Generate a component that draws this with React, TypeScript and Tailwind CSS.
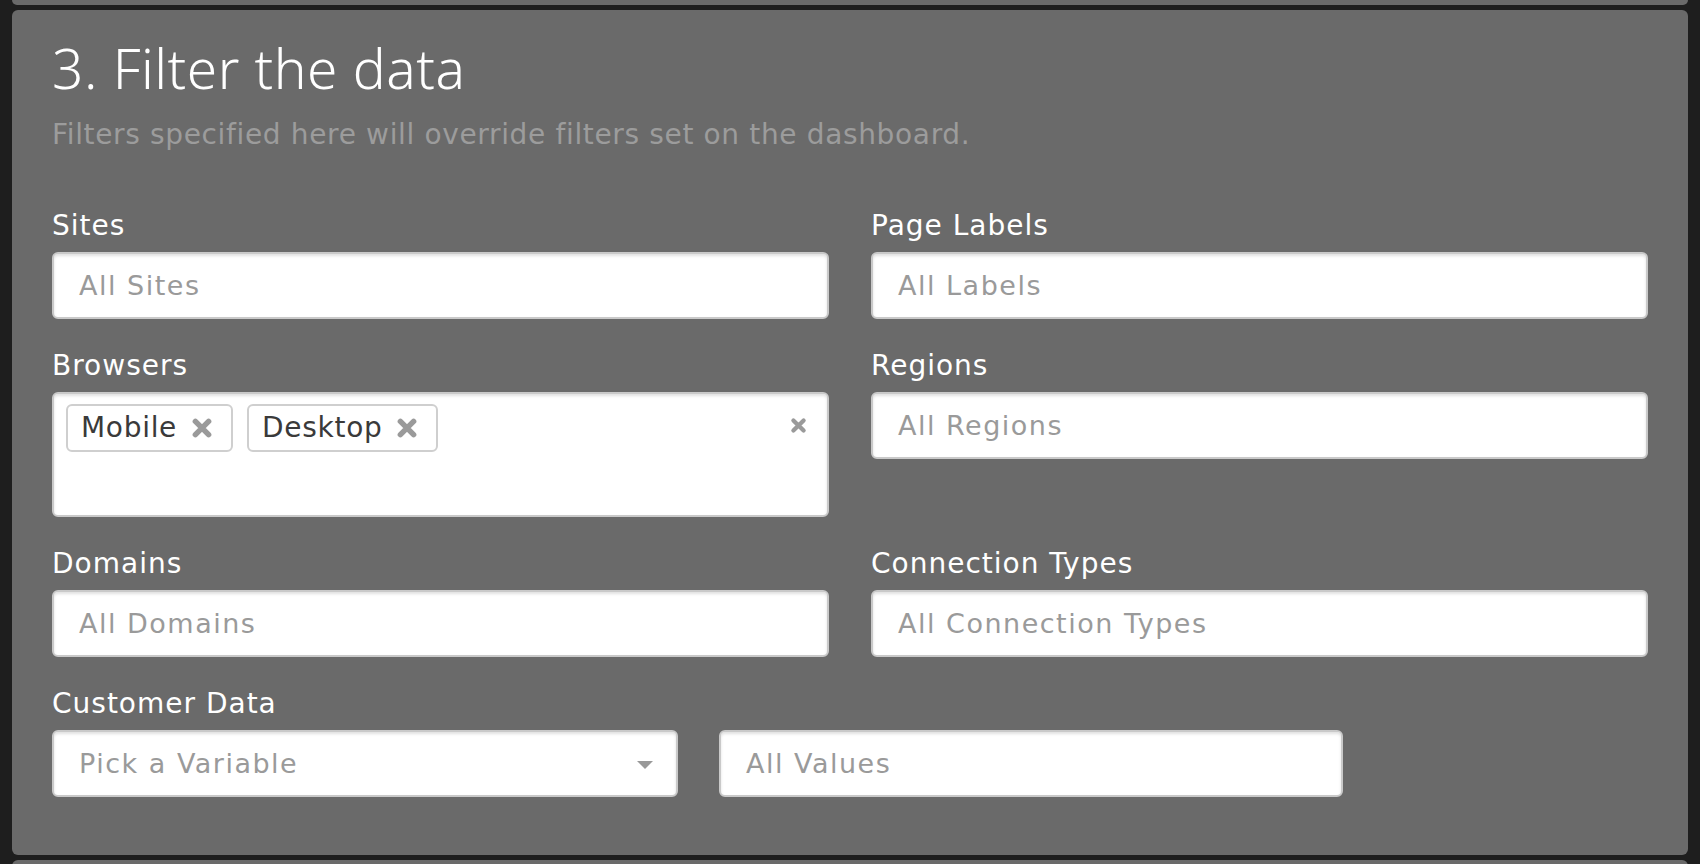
import React from "react";

const font = { fontFamily: '"DejaVu Sans", "Noto Sans", sans-serif' };

const inputBox =
  "bg-white rounded-md border-2 border-[#c9c9c9] shadow-[inset_0_2px_3px_rgba(0,0,0,0.12)]";

const HeavyX = ({ size, color = "#9a9a9a" }: { size: number; color?: string }) => (
  <svg width={size} height={size} viewBox="0 0 20 20">
    <path d="M4 4 L16 16 M16 4 L4 16" stroke={color} strokeWidth="5" strokeLinecap="round" />
  </svg>
);

const Field = ({ label, children }: { label: string; children: React.ReactNode }) => (
  <div className="flex flex-col">
    <div className="pt-[3px] mb-[9px] text-[28px] leading-[34px] tracking-[1px] text-white">{label}</div>
    {children}
  </div>
);

const TextInput = ({ placeholder }: { placeholder: string }) => (
  <div
    className={`${inputBox} h-[67px] flex items-center pl-[25px] pt-[2px] text-[27px] tracking-[1.5px] text-[#9a9a9a]`}
  >
    {placeholder}
  </div>
);

const Chip = ({ text }: { text: string }) => (
  <div className="h-12 flex items-center gap-[14px] pl-[13px] pr-[18px] rounded-md border-2 border-[#cfcfcf] bg-white">
    <span className="text-[28px] tracking-[0.7px] text-[#3a3a3a]">{text}</span>
    <HeavyX size={22} />
  </div>
);

export default function App() {
  return (
    <div className="min-h-screen bg-[#1e1e1e] px-3" style={font}>
      <div className="h-[5px] bg-[#6a6a6a] rounded-b-md" />
      <div className="mt-[5px] bg-[#6a6a6a] rounded-md px-10 pt-[25px] pb-[58px]">
        <h1
          className="text-[55px] leading-[66px] font-light tracking-[0.5px] text-white"
          style={{ fontFamily: '"Noto Sans", sans-serif' }}
        >
          3. Filter the data
        </h1>
        <p className="mt-[17px] text-[28px] leading-[34px] tracking-[0.65px] text-[#9c9c9c]">
          Filters specified here will override filters set on the dashboard.
        </p>

        <div className="mt-[54px] grid grid-cols-2 gap-x-[42px] gap-y-[27px] items-start">
          <Field label="Sites">
            <TextInput placeholder="All Sites" />
          </Field>
          <Field label="Page Labels">
            <TextInput placeholder="All Labels" />
          </Field>

          <Field label="Browsers">
            <div className={`${inputBox} h-[125px] flex items-start pt-[10px] pl-3 pr-[20px]`}>
              <div className="flex gap-[14px] flex-1">
                <Chip text="Mobile" />
                <Chip text="Desktop" />
              </div>
              <div className="mt-[13px]">
                <HeavyX size={17} />
              </div>
            </div>
          </Field>
          <Field label="Regions">
            <TextInput placeholder="All Regions" />
          </Field>

          <Field label="Domains">
            <TextInput placeholder="All Domains" />
          </Field>
          <Field label="Connection Types">
            <TextInput placeholder="All Connection Types" />
          </Field>
        </div>

        <div className="mt-[27px]">
          <div className="pt-[3px] mb-[9px] text-[28px] leading-[34px] tracking-[1px] text-white">
            Customer Data
          </div>
          <div className="flex gap-[41px]">
            <div
              className={`${inputBox} w-[626px] h-[67px] flex items-center justify-between pl-[25px] pr-[23px] pt-[2px] text-[27px] tracking-[1.5px] text-[#9a9a9a]`}
            >
              <span>Pick a Variable</span>
              <svg width="16" height="8" viewBox="0 0 16 8">
                <path d="M0 0 H16 L8 8 Z" fill="#999999" />
              </svg>
            </div>
            <div
              className={`${inputBox} w-[624px] h-[67px] flex items-center pl-[25px] pt-[2px] text-[27px] tracking-[1.5px] text-[#9a9a9a]`}
            >
              All Values
            </div>
          </div>
        </div>
      </div>
      <div className="mt-[5px] h-[20px] bg-[#6a6a6a] rounded-t-md" />
    </div>
  );
}
